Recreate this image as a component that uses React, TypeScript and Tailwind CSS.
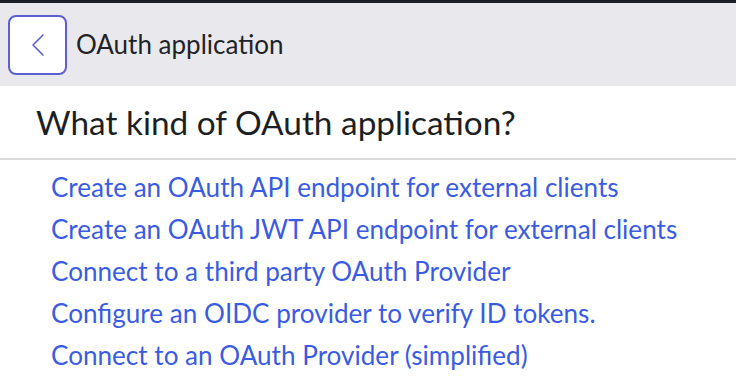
import React from 'react';

const options = [
  'Create an OAuth API endpoint for external clients',
  'Create an OAuth JWT API endpoint for external clients',
  'Connect to a third party OAuth Provider',
  'Configure an OIDC provider to verify ID tokens.',
  'Connect to an OAuth Provider (simplified)',
];

export default function App() {
  return (
    <div className="w-[736px] h-[390px] bg-white overflow-hidden" style={{ fontFamily: 'Lato, "Open Sans", sans-serif' }}>
      {/* top strip */}
      <div className="h-[3px] bg-[#1c1e26]" />

      {/* header */}
      <div className="h-[83px] bg-[#e9e9ed] flex items-center pl-[8px]">
        <button className="w-[59px] h-[60px] bg-white border-2 border-[#5b5fd1] rounded-[8px] flex items-center justify-center">
          <svg width="14" height="24" viewBox="0 0 14 24" fill="none">
            <path d="M12 2 L2 12 L12 22" stroke="#5b5fd1" strokeWidth="1.6" strokeLinecap="round" strokeLinejoin="round" />
          </svg>
        </button>
        <span className="ml-[9px] text-[26px] text-[#1f2328]">OAuth application</span>
      </div>

      {/* question */}
      <div className="h-[74px] flex items-center pl-[36px] border-b-2 border-[#dcdcdf]">
        <h1 className="text-[33.4px] text-[#1c1f24]">What kind of OAuth application?</h1>
      </div>

      {/* options */}
      <ul className="pl-[51px] pt-[7px] flex flex-col">
        {options.map((o) => (
          <li key={o} className="h-[42px] flex items-center">
            <a href="#" className="text-[26.1px] text-[#3a5ce2]">{o}</a>
          </li>
        ))}
      </ul>
    </div>
  );
}
